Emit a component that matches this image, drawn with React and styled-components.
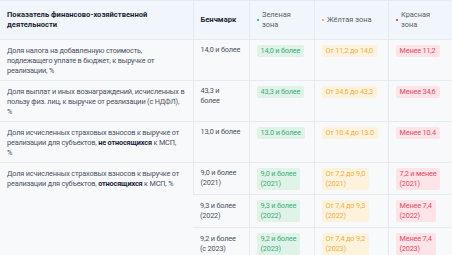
import React from "react";
import styled, { createGlobalStyle } from "styled-components";

const GlobalStyle = createGlobalStyle`
  html, body {
    margin: 0;
    padding: 0;
    background: #ffffff;
    overflow: hidden;
  }
  body {
    font-family: Roboto, "Noto Sans", sans-serif;
  }
`;

const Table = styled.table`
  width: 453px;
  border-collapse: collapse;
  table-layout: fixed;
  font-size: 7.3px;
  letter-spacing: -0.17px;
  line-height: 10px;
  color: #4a5260;
`;

const Row = styled.tr`
  height: ${({ $h }) => $h}px;
`;

const HeadCell = styled.th`
  background: #f1f5fc;
  border-top: 1px solid #e4e9f2;
  border-bottom: 1px solid #e4e9f2;
  border-left: 1px solid #e4e9f2;
  height: 38px;
  padding: 0 7px;
  text-align: left;
  vertical-align: middle;
  font-size: ${({ $plain }) => ($plain ? "7.4px" : "7.6px")};
  letter-spacing: 0;
  font-weight: ${({ $plain }) => ($plain ? 400 : 700)};
  color: ${({ $plain }) => ($plain ? "#5a6170" : "#1d2638")};
  &:first-child {
    border-left: none;
  }
`;

const ZoneLabel = styled.div`
  display: flex;
  align-items: center;
  gap: 3px;
`;

const Dot = styled.span`
  flex: none;
  width: 2.5px;
  height: 2.5px;
  border-radius: 50%;
  background: ${({ $color }) => $color};
`;

const Cell = styled.td`
  background: #f8f9fb;
  border-bottom: 1px solid #e7eaef;
  border-left: 1px solid #e7eaef;
  padding: 5px 6px 4px 7px;
  vertical-align: top;
  &:first-child {
    border-left: none;
    padding-top: 6px;
  }
  b {
    color: #1d2638;
    font-weight: 700;
  }
`;

const tones = {
  green: { bg: "#dff3e8", fg: "#40ad79" },
  yellow: { bg: "#fdf3dd", fg: "#eeb13f" },
  red: { bg: "#fde4e8", fg: "#e34a63" },
};

const Badge = styled.span`
  display: inline-block;
  padding: 1px 4px;
  border-radius: 2px;
  white-space: nowrap;
  background: ${({ $tone }) => tones[$tone].bg};
  color: ${({ $tone }) => tones[$tone].fg};
`;

const rows = [
  {
    h: 40,
    name: "Доля налога на добавленную стоимость, подлежащего уплате в бюджет, к выручке от реализации, %",
    bench: ["14,0 и более"],
    green: "14,0 и более",
    yellow: "От 11,2 до 14,0",
    red: "Менее 11,2",
  },
  {
    h: 40,
    name: (
      <>
        Доля выплат и иных вознаграждений, исчисленных в пользу физ. лиц, к выручке от реализации (с НДФЛ),
        <br />%
      </>
    ),
    bench: ["43,3 и", "более"],
    green: "43,3 и более",
    yellow: "От 34,6 до 43,3",
    red: "Менее 34,6",
  },
  {
    h: 41,
    name: (
      <>
        Доля исчисленных страховых взносов к выручке от реализации для субъектов, <b>не относящихся</b> к МСП,
        <br />%
      </>
    ),
    bench: ["13,0 и более"],
    green: "13.0 и более",
    yellow: "От 10.4 до 13.0",
    red: "Менее 10.4",
  },
];

const smb = [
  { h: 31, bench: ["9,0 и более", "(2021)"], green: ["9,0 и более", "(2021)"], yellow: ["От 7,2 до 9,0", "(2021)"], red: ["7,2 и менее", "(2021)"] },
  { h: 33, bench: ["9,3 и более", "(2022)"], green: ["9,3 и более", "(2022)"], yellow: ["От 7,4 до 9,3", "(2022)"], red: ["Менее 7,4", "(2022)"] },
  { h: 33, bench: ["9,2 и более", "(с 2023)"], green: ["9,2 и более", "(2023)"], yellow: ["От 7,4 до 9,2", "(2023)"], red: ["Менее 7,4", "(2023)"] },
];

const Lines = ({ parts }) =>
  parts.map((p, i) => (
    <React.Fragment key={i}>
      {i > 0 && <br />}
      {p}
    </React.Fragment>
  ));

const App = () => {
  return (
    <>
      <GlobalStyle />
      <Table>
        <colgroup>
          <col style={{ width: 193 }} />
          <col style={{ width: 56 }} />
          <col style={{ width: 65 }} />
          <col style={{ width: 74 }} />
          <col style={{ width: 65 }} />
        </colgroup>
        <thead>
          <tr>
            <HeadCell>Показатель финансово-хозяйственной деятельности</HeadCell>
            <HeadCell>Бенчмарк</HeadCell>
            <HeadCell $plain>
              <ZoneLabel>
                <Dot $color="#1fa363" />
                <span>Зеленая зона</span>
              </ZoneLabel>
            </HeadCell>
            <HeadCell $plain>
              <ZoneLabel>
                <Dot $color="#f2a814" />
                <span>Жёлтая зона</span>
              </ZoneLabel>
            </HeadCell>
            <HeadCell $plain>
              <ZoneLabel>
                <Dot $color="#e3213f" />
                <span>Красная зона</span>
              </ZoneLabel>
            </HeadCell>
          </tr>
        </thead>
        <tbody>
          {rows.map((r, i) => (
            <Row key={i} $h={r.h}>
              <Cell>{r.name}</Cell>
              <Cell><Lines parts={r.bench} /></Cell>
              <Cell><Badge $tone="green">{r.green}</Badge></Cell>
              <Cell><Badge $tone="yellow">{r.yellow}</Badge></Cell>
              <Cell><Badge $tone="red">{r.red}</Badge></Cell>
            </Row>
          ))}
          {smb.map((r, i) => (
            <Row key={`smb-${i}`} $h={r.h}>
              {i === 0 && (
                <Cell rowSpan={3}>
                  Доля исчисленных страховых взносов к выручке от реализации для субъектов, <b>относящихся</b> к МСП, %
                </Cell>
              )}
              <Cell><Lines parts={r.bench} /></Cell>
              <Cell><Badge $tone="green"><Lines parts={r.green} /></Badge></Cell>
              <Cell><Badge $tone="yellow"><Lines parts={r.yellow} /></Badge></Cell>
              <Cell><Badge $tone="red"><Lines parts={r.red} /></Badge></Cell>
            </Row>
          ))}
        </tbody>
      </Table>
    </>
  );
};

export default App;
